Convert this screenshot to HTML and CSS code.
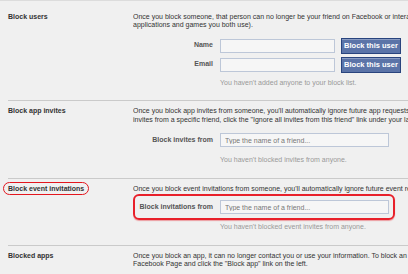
FILE: index.html
```html
<!DOCTYPE html>
<html lang="en">
<head>
    <meta charset="UTF-8">
    <title>Blocking</title>
    <link rel="stylesheet" href="styles.css">
</head>
<body>
    <div class="page">
        <div class="section section-first">
            <div class="title">Block users</div>
            <div class="content">
                <p class="desc">Once you block someone, that person can no longer be your friend on Facebook or interact<br>applications and games you both use).</p>
                <div class="row">
                    <label class="label">Name</label>
                    <input class="field field-short" type="text">
                    <a class="btn" href="javascript:void(0)">Block this user</a>
                </div>
                <div class="row row-next">
                    <label class="label">Email</label>
                    <input class="field field-short" type="text">
                    <a class="btn" href="javascript:void(0)">Block this user</a>
                </div>
                <p class="note note-first">You haven't added anyone to your block list.</p>
            </div>
        </div>
        <div class="section">
            <div class="title">Block app invites</div>
            <div class="content">
                <p class="desc">Once you block app invites from someone, you'll automatically ignore future app requests from<br>invites from a specific friend, click the "Ignore all invites from this friend" link under your latest</p>
                <div class="row row-wide">
                    <label class="label">Block invites from</label>
                    <input class="field" type="text" placeholder="Type the name of a friend...">
                </div>
                <p class="note">You haven't blocked invites from anyone.</p>
            </div>
        </div>
        <div class="section">
            <div class="title"><span class="circled">Block event invitations</span></div>
            <div class="content">
                <p class="desc">Once you block event invitations from someone, you'll automatically ignore future event requests</p>
                <div class="row row-marked">
                    <label class="label">Block invitations from</label>
                    <input class="field" type="text" placeholder="Type the name of a friend...">
                </div>
                <p class="note note-close">You haven't blocked event invites from anyone.</p>
            </div>
        </div>
        <div class="section section-last">
            <div class="title">Blocked apps</div>
            <div class="content">
                <p class="desc">Once you block an app, it can no longer contact you or use your information. To block an app,<br>Facebook Page and click the "Block app" link on the left.</p>
            </div>
        </div>
    </div>
</body>
</html>
```

FILE: styles.css
```css
* {
    margin: 0;
    padding: 0;
    box-sizing: border-box;
    font-family: "Liberation Sans", Arial, sans-serif;
}
html, body {
    width: 100%;
    height: 100%;
    overflow: hidden;
    background: #f0f0f0;
}
.page {
    padding-left: 8px;
    border-top: 1px solid #dcdcdc;
    font-size: 7px;
    line-height: 8.5px;
    color: #333;
}
.section {
    display: flex;
    padding: 6px 0 13px;
    border-top: 1px solid #cacaca;
}
.section-first {
    border-top: none;
    padding-top: 11.5px;
}
.title {
    width: 125px;
    flex-shrink: 0;
    font-weight: bold;
    color: #333;
}
.circled {
    padding: 2px 4px;
    margin-left: -5px;
    border: 1px solid #e3161e;
    border-radius: 7px;
}
.content {
    flex: 1;
    min-width: 0;
    overflow: hidden;
    white-space: nowrap;
}
.desc {
    color: #333;
}
.row {
    display: flex;
    align-items: center;
    margin-top: 8px;
}
.row-next {
    margin-top: 3px;
}
.row-wide {
    margin-top: 9px;
}
.label {
    width: 80px;
    text-align: right;
    font-weight: bold;
    color: #555;
}
.field {
    margin-left: 7px;
    width: 169px;
    height: 14px;
    padding: 0 4px;
    border: 1px solid #bdc7d8;
    background: #f6f6f6;
    font-size: 7px;
    color: #333;
    outline: none;
}
.field::placeholder {
    color: #777;
}
.field-short {
    width: 115px;
}
.btn {
    display: inline-block;
    width: 60px;
    height: 16px;
    margin-left: 6px;
    line-height: 14px;
    text-align: center;
    font-weight: bold;
    font-size: 7.5px;
    color: #fff;
    text-decoration: none;
    background: #5b74a8;
    border: 1px solid #29447e;
    box-shadow: inset 0 1px 0 #8a9cc2;
}
.note {
    margin-top: 9px;
    margin-left: 87px;
    color: #999;
}
.note-first {
    margin-top: 6px;
}
.row-marked {
    width: 262px;
    margin-top: 1px;
    padding: 4px 4px 4px 0;
    border: 2px solid #e8202a;
    border-radius: 6px;
    box-shadow: 0 1px 1px rgba(232, 32, 42, 0.4);
}
.row-marked .label {
    width: 78px;
}
.note-close {
    margin-top: 3px;
}
.section-last {
    padding-bottom: 0;
}
```
